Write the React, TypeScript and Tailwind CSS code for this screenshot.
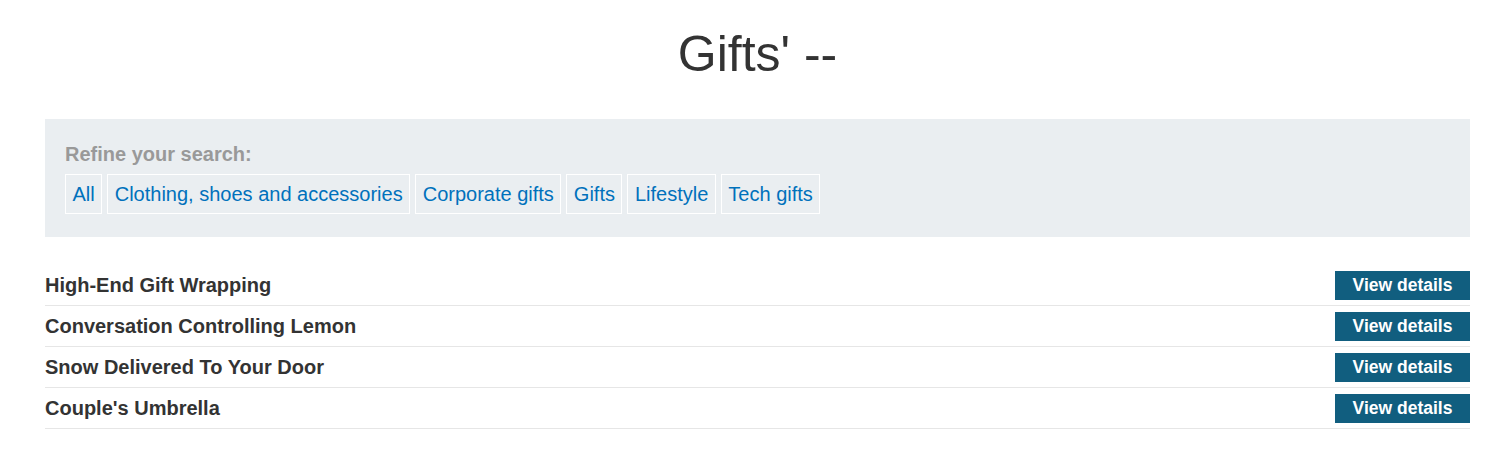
const categories = [
  'All',
  'Clothing, shoes and accessories',
  'Corporate gifts',
  'Gifts',
  'Lifestyle',
  'Tech gifts',
]

const products = [
  'High-End Gift Wrapping',
  'Conversation Controlling Lemon',
  'Snow Delivered To Your Door',
  "Couple's Umbrella",
]

export default function App() {
  return (
    <div className="min-h-[467px] bg-white font-['Liberation_Sans',Arial,sans-serif] text-[#333333]">
      <div className="ml-[45px] w-[1425px]">
        {/* Title */}
        <h1 className="pt-[24px] text-center text-[50px] leading-[60px] font-normal">
          Gifts' --
        </h1>

        {/* Filter panel */}
        <section className="mt-[35px] bg-[#eaeef1] px-[20px] py-[23px]">
          <div className="mb-[8px] text-[20px] leading-[24px] font-bold text-[#999999]">
            Refine your search:
          </div>
          <div className="flex flex-wrap gap-[5px]">
            {categories.map((c) => (
              <a
                key={c}
                href="#"
                className="border border-white px-[6.5px] py-[6px] text-[20px] leading-[26px] text-[#0071bc]"
              >
                {c}
              </a>
            ))}
          </div>
        </section>

        {/* Product list */}
        <ul className="mt-[28px]">
          {products.map((p) => (
            <li
              key={p}
              className="flex h-[41px] items-start justify-between border-b border-[#e6e6e6]"
            >
              <span className="mt-[8px] text-[20px] leading-[24px] font-bold">
                {p}
              </span>
              <a
                href="#"
                className="mt-[6px] flex h-[29px] w-[135px] items-center justify-center bg-[#115e7f] text-[17.5px] font-bold text-white"
              >
                View details
              </a>
            </li>
          ))}
        </ul>
      </div>
    </div>
  )
}
